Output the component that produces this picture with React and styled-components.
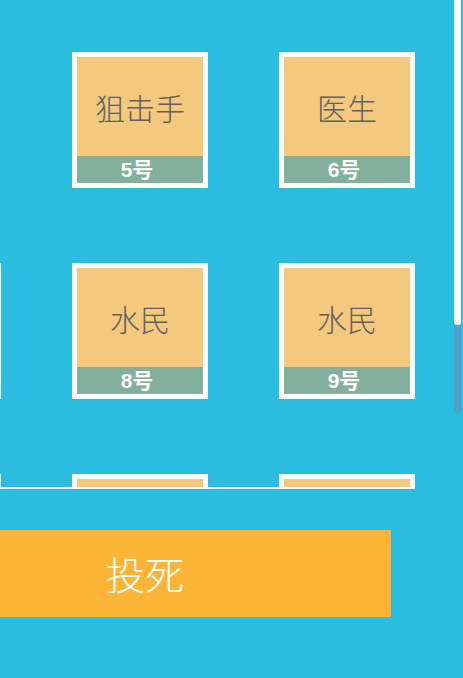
import styled, { createGlobalStyle } from 'styled-components'

const GlobalStyle = createGlobalStyle`
    html, body {
        margin: 0;
        padding: 0;
        background: #2bbde0;
    }
    * {
        box-sizing: border-box;
    }
`;

const Page = styled.div`
    position: relative;
    width: 463px;
    height: 678px;
    overflow: hidden;
    background: #2bbde0;
    font-family: "Noto Sans CJK SC", "Noto Sans", sans-serif;
`;

const Board = styled.div`
    width: 415px;
    height: 489px;
    overflow: hidden;
    border-bottom: 2px solid #fff;
`;

const Grid = styled.div`
    display: grid;
    grid-template-columns: repeat(3, 136px);
    column-gap: 71px;
    row-gap: 75px;
    margin-left: -135px;
    padding-top: 52px;
`;

const Card = styled.div`
    width: 136px;
    height: 136px;
    border: 5px solid #fff;
    display: flex;
    flex-direction: column;
    visibility: ${p => (p.$empty ? 'hidden' : 'visible')};
`;

const Role = styled.div`
    flex: 1;
    background: #f4c97e;
    color: #606060;
    font-size: 30px;
    font-weight: 300;
    display: flex;
    align-items: center;
    justify-content: center;
`;

const Seat = styled.div`
    height: 27px;
    background: #82b09c;
    color: #fff;
    font-family: "Liberation Sans", "Noto Sans CJK SC", sans-serif;
    font-size: 21px;
    font-weight: bold;
    line-height: 27px;
    text-align: center;
    padding-right: 6px;
`;

const Vote = styled.button`
    display: flex;
    align-items: center;
    width: 391px;
    height: 87px;
    margin-top: 41px;
    padding: 0 0 0 106px;
    border: none;
    background: #fdb538;
    color: #fff;
    font-family: "Noto Sans CJK SC", "Noto Sans", sans-serif;
    font-size: 39px;
    line-height: 1;
    font-weight: 300;
    cursor: pointer;
`;

const Scrollbar = styled.div`
    position: absolute;
    top: 0;
    right: 2px;
    width: 7px;
    display: flex;
    flex-direction: column;
`;

const Track = styled.div`
    height: 325px;
    background: #fff;
    border-radius: 0 0 4px 4px;
`;

const Thumb = styled.div`
    height: 88px;
    background: #4fa0c8;
    border-radius: 0 0 4px 4px;
`;

const players = [
    null,
    { role: '狙击手', seat: 5 },
    { role: '医生', seat: 6 },
    { role: '平民', seat: 7 },
    { role: '水民', seat: 8 },
    { role: '水民', seat: 9 },
    { role: '平民', seat: 10 },
    { role: '平民', seat: 11 },
    { role: '平民', seat: 12 },
]

const App = () => {
    return (
        <Page>
            <GlobalStyle />
            <Board>
                <Grid>
                    {players.map((p, i) =>
                        p ? (
                            <Card key={i}>
                                <Role>{p.role}</Role>
                                <Seat>{p.seat}号</Seat>
                            </Card>
                        ) : (
                            <Card key={i} $empty />
                        )
                    )}
                </Grid>
            </Board>

            <Vote>投死</Vote>

            <Scrollbar>
                <Track />
                <Thumb />
            </Scrollbar>
        </Page>
    )
}

export default App
